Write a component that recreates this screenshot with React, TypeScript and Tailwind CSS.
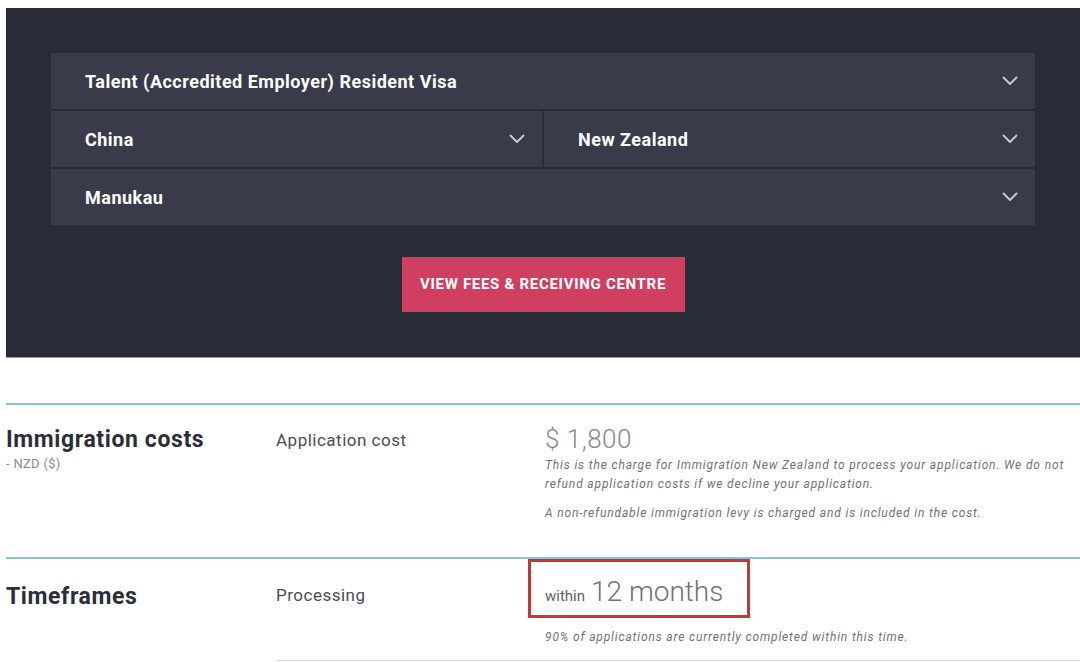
import React from 'react';

const font = { fontFamily: 'Roboto, "Noto Sans", sans-serif' };

function Chevron() {
    return (
        <svg width="16" height="10" viewBox="0 0 16 10" fill="none" className="shrink-0">
            <polyline points="1.5,1.5 8,8 14.5,1.5" stroke="#c9cad2" strokeWidth="1.8" strokeLinecap="round" strokeLinejoin="round" />
        </svg>
    );
}

function SelectCell({ label, className = '' }: { label: string; className?: string }) {
    return (
        <div className={`flex items-center justify-between bg-[#393b4a] pl-[34px] pr-[17px] h-[56px] ${className}`}>
            <span className="text-white font-bold text-[18px] tracking-[0.5px]">{label}</span>
            <Chevron />
        </div>
    );
}

export default function App() {
    return (
        <div className="w-[1080px] h-[662px] overflow-hidden bg-white" style={font}>
            {/* Search panel */}
            <div className="pt-[8px] pl-[6px]">
                <div className="h-[350px] bg-[#292c37] border-b border-[#9a9ba2] px-[45px] pt-[45px] flex flex-col">
                    <div className="flex flex-col gap-[2px]">
                        <SelectCell label="Talent (Accredited Employer) Resident Visa" />
                        <div className="flex gap-[2px]">
                            <SelectCell label="China" className="flex-1" />
                            <SelectCell label="New Zealand" className="flex-1" />
                        </div>
                        <SelectCell label="Manukau" />
                    </div>
                    <div className="flex justify-center mt-[32px]">
                        <button className="w-[283px] h-[55px] bg-[#d13f60] text-white font-bold text-[15px] uppercase tracking-[0.7px]">
                            View Fees &amp; Receiving Centre
                        </button>
                    </div>
                </div>
            </div>

            {/* Costs */}
            <div className="pl-[6px] mt-[45px]">
                <div className="border-t-2 border-[#8fc1d0] flex h-[154px]">
                    <div className="w-[270px] pt-[21px]">
                        <div className="text-[23px] leading-[28px] font-bold text-[#2b2e38] tracking-[0.6px]">Immigration costs</div>
                        <div className="mt-[2px] text-[13px] leading-[16px] text-[#8a8c93] tracking-[0.3px]">- NZD ($)</div>
                    </div>
                    <div className="w-[269px] pt-[23px] text-[17px] leading-[24px] text-[#4a4c54] tracking-[0.5px]">Application cost</div>
                    <div className="flex-1 pt-[19px] pr-[12px]">
                        <div className="text-[26px] leading-[30px] font-light text-[#85878e] tracking-[0.5px]">$ 1,800</div>
                        <p className="mt-[2px] text-[12px] leading-[19px] italic text-[#6f7178] tracking-[0.85px]">
                            This is the charge for Immigration New Zealand to process your application. We do not refund application costs if we decline your application.
                        </p>
                        <p className="mt-[10px] text-[12px] leading-[19px] italic text-[#6f7178] tracking-[0.85px]">
                            A non-refundable immigration levy is charged and is included in the cost.
                        </p>
                    </div>
                </div>

                {/* Timeframes */}
                <div className="border-t-2 border-[#8fc1d0] flex">
                    <div className="w-[270px] pt-[24px] text-[23px] leading-[28px] font-bold text-[#2b2e38] tracking-[0.6px]">Timeframes</div>
                    <div className="w-[269px] flex flex-col">
                        <div className="pt-[24px] text-[17px] leading-[24px] text-[#4a4c54] h-[101px] tracking-[0.5px]">Processing</div>
                        <div className="border-b border-[#dcdde0]" />
                    </div>
                    <div className="flex-1 flex flex-col">
                        <div className="-ml-[17px] w-[222px] h-[59px] border-[3px] border-[#c3373b] pl-[14px] pt-[13px]">
                            <div className="leading-[34px] whitespace-nowrap">
                                <span className="text-[15px] text-[#5f6168] mr-[6px]">within</span>
                                <span className="text-[28px] font-light text-[#6f7178]">12 months</span>
                            </div>
                        </div>
                        <p className="mt-[10px] text-[12px] leading-[18px] italic text-[#6f7178] h-[32px] tracking-[0.85px]">
                            90% of applications are currently completed within this time.
                        </p>
                        <div className="border-b border-[#dcdde0]" />
                    </div>
                </div>
            </div>
        </div>
    );
}
